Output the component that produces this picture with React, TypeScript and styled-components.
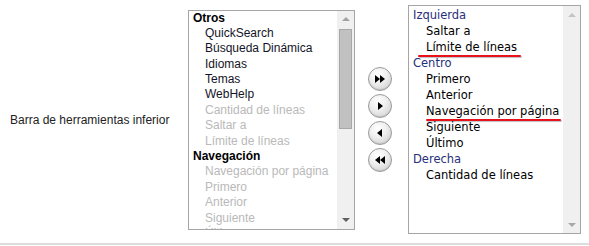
import React from "react";
import styled, { createGlobalStyle } from "styled-components";

interface IItem {
  label: string;
  group?: boolean;
  disabled?: boolean;
  mark?: [number, number];
}

const available: IItem[] = [
  { label: "Otros", group: true },
  { label: "QuickSearch" },
  { label: "Búsqueda Dinámica" },
  { label: "Idiomas" },
  { label: "Temas" },
  { label: "WebHelp" },
  { label: "Cantidad de líneas", disabled: true },
  { label: "Saltar a", disabled: true },
  { label: "Límite de líneas", disabled: true },
  { label: "Navegación", group: true },
  { label: "Navegación por página", disabled: true },
  { label: "Primero", disabled: true },
  { label: "Anterior", disabled: true },
  { label: "Siguiente", disabled: true },
  { label: "Último", disabled: true },
];

const selected: IItem[] = [
  { label: "Izquierda", group: true },
  { label: "Saltar a" },
  { label: "Límite de líneas", mark: [-8, -4] },
  { label: "Centro", group: true },
  { label: "Primero" },
  { label: "Anterior" },
  { label: "Navegación por página", mark: [0, -2] },
  { label: "Siguiente" },
  { label: "Último" },
  { label: "Derecha", group: true },
  { label: "Cantidad de líneas" },
];

function Arrows({ dir, double }: { dir: "left" | "right"; double?: boolean }) {
  const tri = (x: number) =>
    dir === "right"
      ? `M${x} 4 L${x + 5} 8 L${x} 12 Z`
      : `M${x + 5} 4 L${x} 8 L${x + 5} 12 Z`;
  return (
    <svg width="16" height="16" viewBox="0 0 16 16">
      {double ? (
        <>
          <path d={tri(3)} fill="#000" />
          <path d={tri(8)} fill="#000" />
        </>
      ) : (
        <path d={tri(dir === "right" ? 6 : 5)} fill="#000" />
      )}
    </svg>
  );
}

function Scrollbar({ thumb }: { thumb?: boolean }) {
  return (
    <Track>
      <ArrowCell>
        <Caret $up $dim={!thumb} />
      </ArrowCell>
      <ThumbArea>{thumb && <Thumb />}</ThumbArea>
      <ArrowCell>
        <Caret $dim={!thumb} />
      </ArrowCell>
    </Track>
  );
}

export default function App() {
  return (
    <>
      <GlobalStyle />
      <Row>
        <Label>Barra de herramientas inferior</Label>
        <LeftBox>
          <Items>
            {available.map((item, i) =>
              item.group ? (
                <GroupHeader key={i}>{item.label}</GroupHeader>
              ) : (
                <LeftItem key={i} $disabled={item.disabled}>
                  {item.label}
                </LeftItem>
              )
            )}
          </Items>
          <Scrollbar thumb />
        </LeftBox>
        <ButtonColumn>
          <RoundButton>
            <Arrows dir="right" double />
          </RoundButton>
          <RoundButton>
            <Arrows dir="right" />
          </RoundButton>
          <RoundButton>
            <Arrows dir="left" />
          </RoundButton>
          <RoundButton>
            <Arrows dir="left" double />
          </RoundButton>
        </ButtonColumn>
        <RightBox>
          <Items $pad={1}>
            {selected.map((item, i) =>
              item.group ? (
                <RightHeader key={i}>{item.label}</RightHeader>
              ) : (
                <RightItem key={i}>
                  {item.mark ? (
                    <Marked $l={item.mark[0]} $r={item.mark[1]}>
                      {item.label}
                    </Marked>
                  ) : (
                    item.label
                  )}
                </RightItem>
              )
            )}
          </Items>
          <Scrollbar />
        </RightBox>
      </Row>
    </>
  );
}

const GlobalStyle = createGlobalStyle`
  body {
    margin: 0;
    background: #fff;
    font-family: "Liberation Sans", Arial, sans-serif;
  }
`;

const Row = styled.div`
  display: flex;
  align-items: center;
  padding: 5px 0 9px;
  border-bottom: 2px solid #dcdcdc;
  width: 589px;
`;

const Label = styled.div`
  width: 178px;
  padding-left: 10px;
  font-size: 12px;
  color: #222;
`;

const LeftBox = styled.div`
  display: flex;
  width: 167px;
  height: 220px;
  box-sizing: border-box;
  border: 1px solid #a5a5a5;
  background: #fff;
`;

const RightBox = styled(LeftBox)`
  width: 173px;
  height: 229px;
  margin-left: 3px;
`;

const Items = styled.div<{ $pad?: number }>`
  flex: 1;
  overflow: hidden;
  padding: ${(p) => p.$pad ?? 0}px 0 0 4px;
`;

const GroupHeader = styled.div`
  height: 15.4px;
  line-height: 15.4px;
  font-size: 12px;
  font-weight: bold;
  color: #000;
  white-space: nowrap;
`;

const LeftItem = styled.div<{ $disabled?: boolean }>`
  height: 15.4px;
  line-height: 15.4px;
  font-size: 12px;
  padding-left: 12px;
  color: ${(p) => (p.$disabled ? "#b9b9b9" : "#141428")};
  white-space: nowrap;
`;

const RightHeader = styled.div`
  height: 16px;
  line-height: 16px;
  font-family: "DejaVu Sans", Verdana, sans-serif;
  font-size: 11.5px;
  color: #27307a;
  white-space: nowrap;
`;

const RightItem = styled(RightHeader)`
  color: #000;
  padding-left: 13px;
`;

const Marked = styled.span<{ $l: number; $r: number }>`
  position: relative;

  &::after {
    content: "";
    position: absolute;
    left: ${(p) => p.$l}px;
    right: ${(p) => p.$r}px;
    bottom: -3px;
    height: 2px;
    background: #e8101a;
    box-shadow: 1px 1px 1px rgba(0, 0, 0, 0.25);
    border-radius: 1px;
  }
`;

const Track = styled.div`
  width: 17px;
  display: flex;
  flex-direction: column;
  background: #f0f0f0;
`;

const ArrowCell = styled.div`
  height: 17px;
  display: flex;
  align-items: center;
  justify-content: center;
`;

const Caret = styled.div<{ $up?: boolean; $dim?: boolean }>`
  width: 0;
  height: 0;
  border-left: 4px solid transparent;
  border-right: 4px solid transparent;
  ${(p) =>
    p.$up
      ? `border-bottom: 4px solid ${p.$dim ? "#c4c4c4" : "#a3a3a3"};`
      : `border-top: 4px solid ${p.$dim ? "#a8a8a8" : "#606060"};`}
`;

const ThumbArea = styled.div`
  flex: 1;
  padding: 1px 2px;
`;

const Thumb = styled.div`
  height: 100px;
  background: #c1c1c1;
  border: 1px solid #a8a8a8;
  box-sizing: border-box;
`;

const ButtonColumn = styled.div`
  width: 50px;
  display: flex;
  flex-direction: column;
  align-items: center;
  gap: 3px;
`;

const RoundButton = styled.button`
  width: 24px;
  height: 24px;
  padding: 0;
  border-radius: 50%;
  border: 1px solid #9a9a9a;
  background: radial-gradient(circle at 40% 30%, #ffffff 0%, #f0f0f0 40%, #c9c9c9 100%);
  box-shadow: inset 0 -1px 1px rgba(0, 0, 0, 0.1);
  display: flex;
  align-items: center;
  justify-content: center;
  cursor: pointer;
`;
